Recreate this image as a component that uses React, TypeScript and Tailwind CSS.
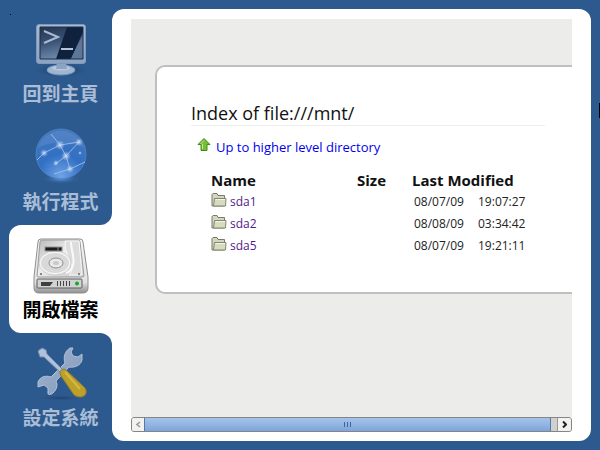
import type { ReactNode } from 'react';

function TerminalIcon() {
  return (
    <svg width="58" height="58" viewBox="0 0 58 58" aria-hidden="true">
      <defs>
        <linearGradient id="screen" x1="0" y1="0" x2="0.3" y2="1">
          <stop offset="0" stopColor="#24344f" />
          <stop offset="0.5" stopColor="#3b5275" />
          <stop offset="1" stopColor="#6f89ab" />
        </linearGradient>
        <linearGradient id="bezel" x1="0" y1="0" x2="0" y2="1">
          <stop offset="0" stopColor="#a9bbd3" />
          <stop offset="1" stopColor="#8ba4c3" />
        </linearGradient>
        <radialGradient id="shade">
          <stop offset="0" stopColor="#173a66" stopOpacity="0.8" />
          <stop offset="1" stopColor="#173a66" stopOpacity="0" />
        </radialGradient>
      </defs>
      <ellipse cx="29" cy="51" rx="26" ry="7" fill="url(#shade)" />
      <ellipse cx="29" cy="51" rx="14" ry="5" fill="#a0b5cf" stroke="#7d97b8" />
      <ellipse cx="29" cy="49" rx="9" ry="2.5" fill="#b9c9dd" />
      <path d="M25 43h9l1 7H24z" fill="#8ca4c3" />
      <rect x="4.5" y="5.5" width="49" height="39" rx="2.5" fill="url(#bezel)" stroke="#8099ba" />
      <rect x="8" y="8" width="43" height="32" fill="url(#screen)" />
      <path d="M35 8h16v5L39 40H24z" fill="#10213e" />
      <path d="M51 16v24H39z" fill="#5d7699" />
      <path d="M8 8h43v32H8z" fill="none" stroke="#1b2e4b" />
      <path d="M12 12l14 6-14 6" fill="none" stroke="#a9bbd4" strokeWidth="2" />
      <path d="M29 30h12" stroke="#b3c4da" strokeWidth="2" />
    </svg>
  );
}

function GlobeIcon() {
  return (
    <svg width="58" height="58" viewBox="0 0 58 58" aria-hidden="true">
      <defs>
        <radialGradient id="globe" cx="0.5" cy="0.95" r="0.9">
          <stop offset="0" stopColor="#6fa3e6" />
          <stop offset="0.5" stopColor="#3270c4" />
          <stop offset="1" stopColor="#4377bd" />
        </radialGradient>
        <radialGradient id="glow">
          <stop offset="0" stopColor="#5b95df" />
          <stop offset="1" stopColor="#2d5a8e" stopOpacity="0" />
        </radialGradient>
        <radialGradient id="node">
          <stop offset="0" stopColor="#d5e3f6" />
          <stop offset="1" stopColor="#9dbfec" stopOpacity="0" />
        </radialGradient>
      </defs>
      <ellipse cx="29" cy="52" rx="20" ry="5" fill="url(#glow)" />
      <circle cx="29" cy="27" r="25" fill="url(#globe)" stroke="#4b7ec4" />
      <path d="M6 21a24 24 0 0 1 46 0c-8-6-36-7-46 0z" fill="#a7c4ec" opacity="0.15" />
      <path d="M19 7l9 11 19-3-13 14-6-11-16 8-7 7M34 29l-12 9M34 29l4 13-16 5M38 42l15-7" fill="none" stroke="#a3c3ee" opacity="0.85" />
      <g fill="url(#node)">
        <circle cx="28" cy="18" r="5" />
        <circle cx="47" cy="15" r="4" />
        <circle cx="34" cy="29" r="5" />
        <circle cx="12" cy="26" r="4" />
        <circle cx="38" cy="42" r="4" />
        <circle cx="24" cy="36" r="3" />
        <circle cx="48" cy="26" r="2" />
      </g>
    </svg>
  );
}

function DriveIcon() {
  return (
    <svg width="58" height="58" viewBox="0 0 58 58" className="overflow-visible" aria-hidden="true">
      <defs>
        <linearGradient id="case" x1="0" y1="0" x2="1" y2="1">
          <stop offset="0" stopColor="#b9b9b9" />
          <stop offset="0.45" stopColor="#ededed" />
          <stop offset="1" stopColor="#c6c6c6" />
        </linearGradient>
        <linearGradient id="front" x1="0" y1="0" x2="0" y2="1">
          <stop offset="0" stopColor="#f4f4f4" />
          <stop offset="0.8" stopColor="#e2e2e2" />
          <stop offset="1" stopColor="#8f8f8f" />
        </linearGradient>
      </defs>
      <path d="M9 4h39q3 0 3 3l5 35v11q0 5-5 5H7q-5 0-5-5V42L6 7q0-3 3-3z" fill="url(#front)" stroke="#8f8f8f" />
      <path d="M10 5h36q2 0 2 2l4 34q0 1-2 1H7q-2 0-2-1L8 7q0-2 2-2z" fill="url(#case)" stroke="#9c9c9c" />
      <path d="M33 6h14l3 34H37c4-4 4-9 1-14-3-6-5-12-5-20z" fill="#dcdcdc" stroke="#f8f8f8" />
      <ellipse cx="23" cy="28" rx="15" ry="11" fill="#d9d9d9" stroke="#f5f5f5" strokeWidth="2" />
      <ellipse cx="23" cy="28" rx="16" ry="12" fill="none" stroke="#aaaaaa" strokeWidth="0.5" />
      <path d="M39 7c0 8 4 16 2 23-1 4-4 7-7 8" fill="none" stroke="#f9f9f9" strokeWidth="2" />
      <ellipse cx="24" cy="28" rx="7" ry="5" fill="#e9e9e9" stroke="#8e8e8e" />
      <ellipse cx="24" cy="28" rx="3" ry="2" fill="#c9c9c9" />
      <rect x="13" y="12" width="17" height="4" fill="#1c1c1c" stroke="#909090" />
      <path d="M26 12v4" stroke="#888" />
      <circle cx="9" cy="39" r="1" fill="#666" />
      <circle cx="47" cy="39" r="1" fill="#666" />
      <rect x="5" y="44" width="45" height="9" rx="1" fill="#d2d2d2" stroke="#5d5d5d" />
      <path d="M9 47h12l-3 4H9z" fill="#3f3f3f" />
      <path d="M25.500 46v5m3-5v5m3-5v5m3-5v5m3-5v5" stroke="#444" />
      <circle cx="45" cy="48.500" r="2" fill="#14a82b" />
    </svg>
  );
}

function ToolsIcon() {
  return (
    <svg width="58" height="58" viewBox="0 0 58 58" className="overflow-visible" aria-hidden="true">
      <defs>
        <linearGradient id="steel" x1="0" y1="0" x2="1" y2="1">
          <stop offset="0" stopColor="#a3b6d0" />
          <stop offset="1" stopColor="#8098ba" />
        </linearGradient>
        <radialGradient id="floor">
          <stop offset="0" stopColor="#1d416e" />
          <stop offset="1" stopColor="#2d5a8e" stopOpacity="0" />
        </radialGradient>
      </defs>
      <ellipse cx="28" cy="55" rx="27" ry="3" fill="url(#floor)" />
      <path d="M38 5c-5 3-7 9-5 15L19 34c-6-2-11 0-13 5l0 5 6-2 4 3 0 6c2 1 4 0 5-1 4-4 5-8 3-12l13-14c6 1 12-2 13-7l0-6-4 3-5-1-2-4 2-4z" fill="url(#steel)" stroke="#b2c2d8" strokeWidth="1" />
      <path d="M6 8l4-3 4 2 1 4 17 17-3 2L12 14l-4 0z" fill="#b0c2d9" stroke="#6f8baf" strokeWidth="1" />
      <path d="M28 30c0-3 3-5 6-3l17 16c5 4 4 10-2 11-4 0-7-1-9-5L29 33z" fill="#bda02c" stroke="#8f7c32" />
      <path d="M33 29l15 17" stroke="#d6b93c" strokeWidth="2" />
    </svg>
  );
}

function FolderIcon() {
  return (
    <svg width="16" height="16" viewBox="0 0 16 16" className="-mt-1 shrink-0" aria-hidden="true">
      <path d="M1 14V2.500L2 1.500H6L7 3.500H13.500V14Z" fill="#d4d7bd" stroke="#77796c" />
      <path d="M2.500 14L3.500 6.500H15L14.500 14Z" fill="#d8dcbf" stroke="#838674" />
      <path d="M4.500 7.500H14" stroke="#f4f5e9" />
    </svg>
  );
}

function NavItem({ label, icon }: { label: string; icon: ReactNode }) {
  return (
    <button type="button" className="flex h-[108px] w-full flex-col items-center pt-2.5 text-[19px] leading-7 font-bold">
      {icon}
      <span className="mt-0.5">{label}</span>
    </button>
  );
}

const entries = [
  { name: 'sda1', date: '08/07/09', time: '19:07:27' },
  { name: 'sda2', date: '08/08/09', time: '03:34:42' },
  { name: 'sda5', date: '08/07/09', time: '19:21:11' },
];

function Listing() {
  return (
    <section className="w-[640px] rounded-[10px] border-2 border-[#bfbfbf] bg-white px-[34px] pt-[34px] pb-[35px]">
      <h1 className="w-[354px] border-b border-[#eeeeee] text-[18px] leading-6 text-[#111]">Index of file:///mnt/</h1>
      <a href="#up" className="mt-[11px] ml-1.5 flex w-fit items-center gap-[5px] text-[13px] leading-5 text-[#0000ee]">
        <svg width="14" height="16" viewBox="0 0 14 16" className="-mt-1" aria-hidden="true">
          <path d="M7 1.500L13 7.500H10V13.500H4V7.500H1Z" fill="#78bd36" stroke="#3f8c18" />
          <path d="M7 3.500L3.500 7M5.500 7V12" stroke="#c0e990" />
        </svg>
        Up to higher level directory
      </a>
      <table className="mt-3 ml-5 table-fixed border-collapse text-left">
        <colgroup>
          <col className="w-[146px]" />
          <col className="w-[55px]" />
          <col className="w-[66px]" />
          <col className="w-[60px]" />
        </colgroup>
        <thead>
          <tr className="h-[22px] text-[15px] leading-[22px] text-[#111]">
            <th className="p-0 font-bold">Name</th>
            <th className="p-0 font-bold">Size</th>
            <th colSpan={2} className="p-0 font-bold">Last Modified</th>
          </tr>
        </thead>
        <tbody>
          {entries.map((e) => (
            <tr key={e.name} className="h-[22px] text-[12px] leading-5 text-[#222]">
              <td className="p-0">
                <a href={'#' + e.name} className="flex items-center gap-[3px] text-[#551a8b]">
                  <FolderIcon />
                  {e.name}
                </a>
              </td>
              <td className="p-0" />
              <td className="p-0 pl-0.5">{e.date}</td>
              <td className="p-0">{e.time}</td>
            </tr>
          ))}
        </tbody>
      </table>
    </section>
  );
}

function Scrollbar() {
  return (
    <div className="flex h-[15px] overflow-hidden rounded-[3px] border border-[#858585] bg-[#d0d0cc]">
      <button type="button" aria-label="Scroll left" className="flex w-3 items-center justify-center bg-[#f2f2f0]">
        <svg width="5" height="7" viewBox="0 0 5 7"><path d="M4 1L1 3.500L4 6" fill="none" stroke="#999" strokeWidth="1.500" /></svg>
      </button>
      <div className="flex flex-1 items-center justify-center gap-0.5 border-x border-[#5079b0] bg-linear-to-b from-[#a6c4ea] to-[#7da5da]">
        <i className="h-[5px] w-px bg-[#36659f]" />
        <i className="h-[5px] w-px bg-[#36659f]" />
        <i className="h-[5px] w-px bg-[#36659f]" />
      </div>
      <button type="button" aria-label="Scroll right" className="ml-1.5 flex w-[14px] items-center justify-center border-l border-[#999] bg-[#f2f2f0]">
        <svg width="5" height="7" viewBox="0 0 5 7"><path d="M1 0.500L4 3.500L1 6.500" fill="none" stroke="#222" strokeWidth="2" /></svg>
      </button>
    </div>
  );
}

export default function App() {
  return (
    <div className="relative flex min-h-screen bg-[#2d5a8e] py-[9px] pr-[9px] font-['Open_Sans','Noto_Sans_CJK_TC',sans-serif]">
      <i className="absolute top-3.5 left-2.5 size-px bg-black" />
      <i className="absolute top-[103px] right-0 h-[15px] w-px bg-black" />
      <nav className="w-[112px] shrink-0 font-['Noto_Sans_CJK_TC',sans-serif] text-[#a9bdd6]">
        <div className="bg-white">
          <div className="rounded-br-[12px] bg-[#2d5a8e] pl-[9px]">
            <NavItem label="回到主頁" icon={<TerminalIcon />} />
            <NavItem label="執行程式" icon={<GlobeIcon />} />
          </div>
        </div>
        <div className="ml-[9px] rounded-l-[12px] bg-white text-black">
          <NavItem label="開啟檔案" icon={<DriveIcon />} />
        </div>
        <div className="bg-linear-to-b from-white from-50% to-transparent to-50%">
          <div className="rounded-tr-[12px] bg-[#2d5a8e] pl-[9px]">
            <NavItem label="設定系統" icon={<ToolsIcon />} />
          </div>
        </div>
      </nav>
      <main className="flex min-w-0 flex-1 flex-col rounded-[12px] bg-white px-[19px] pt-2.5 pb-[9px]">
        <div className="flex-1 overflow-hidden bg-[#ececea] pt-[46px] pl-6">
          <Listing />
        </div>
        <Scrollbar />
      </main>
    </div>
  );
}
